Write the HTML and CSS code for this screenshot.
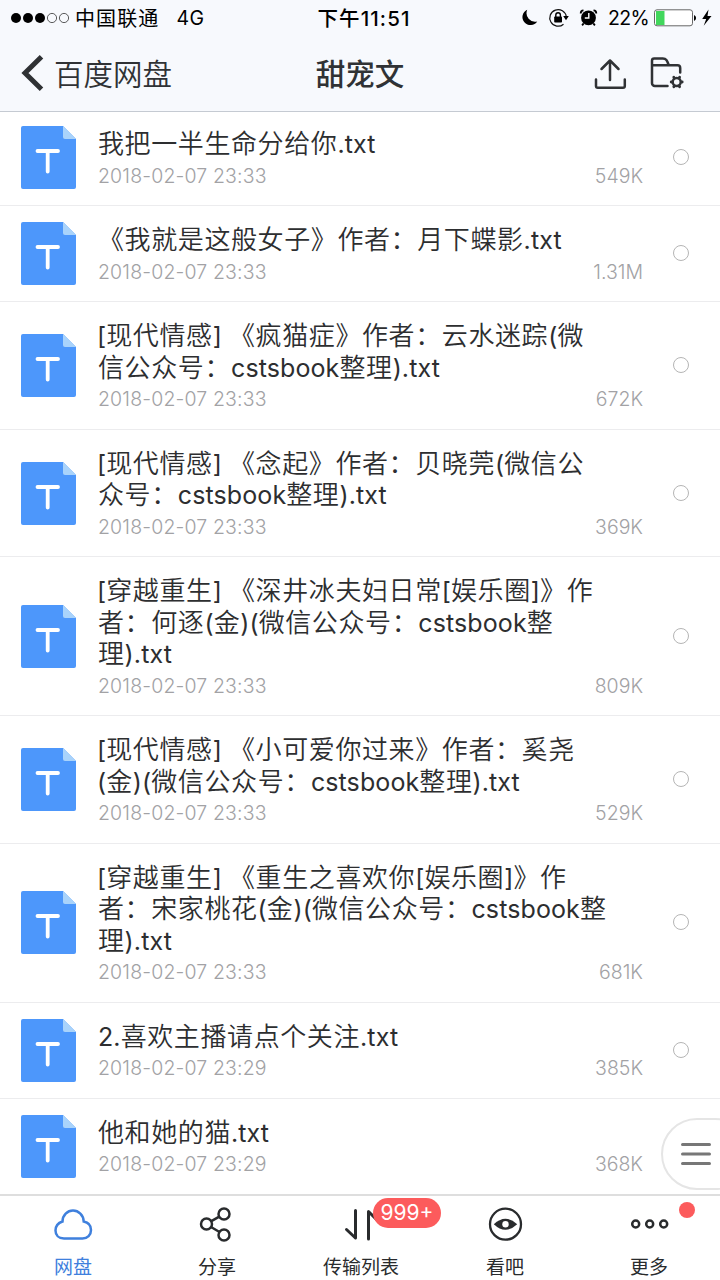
FILE: index.html
```html
<!DOCTYPE html>
<html lang="zh-CN">
<head>
<meta charset="utf-8">
<title>甜宠文</title>
<link rel="stylesheet" href="styles.css">
</head>
<body>
<svg class="defs" aria-hidden="true">
  <symbol id="file" viewBox="0 0 55 63">
    <path d="M2 0H42L55 13V61a2 2 0 0 1-2 2H2a2 2 0 0 1-2-2V2a2 2 0 0 1 2-2z" fill="#4d97fb"/>
    <path d="M42 0L55 13H44a2 2 0 0 1-2-2z" fill="#a9d3fb"/>
    <path d="M16.5 25H37M26.700 25V45.500" fill="none" stroke="#fff" stroke-width="3.800" stroke-linecap="round"/>
  </symbol>
</svg>
<div class="app">
  <header class="header">
    <div class="status">
      <div class="status-left">
        <svg class="signal" width="60" height="12" viewBox="0 0 60 12"><circle cx="6" cy="6" r="5"/><circle cx="18" cy="6" r="5"/><circle cx="30" cy="6" r="5"/><g fill="none" stroke="#333" stroke-width=".8"><circle cx="42" cy="6" r="4.600"/><circle cx="54" cy="6" r="4.600"/></g></svg>
        <span class="carrier">中国联通</span><span class="net">4G</span>
      </div>
      <div class="clock">下午11:51</div>
      <div class="status-right">
        <svg width="92" height="24" viewBox="516 6 92 24">
          <path d="M527.200 9.800a8 8 0 1 0 10 11.600a8.600 8.600 0 0 1-10-11.600z"/>
          <path d="M563.500 24.200a8.300 8.300 0 1 1 2.800-7.500" fill="none" stroke="#111" stroke-width="1.200"/>
          <path d="M563.200 16h5.600l-2.800 4.200z"/>
          <rect x="554.200" y="16.400" width="7.800" height="6.200" rx=".8"/><path d="M555.800 17v-2a2.300 2.300 0 0 1 4.600 0v2" fill="none" stroke="#000" stroke-width="1.400"/>
          <circle cx="588.500" cy="17.800" r="7.400"/><path d="M583.500 10.400a3 3 0 0 0-2.800 3M593.500 10.400a3 3 0 0 1 2.800 3M583.700 23.400l-1.600 2M593.300 23.400l1.600 2" fill="none" stroke="#000" stroke-width="1.800"/>
          <path d="M588.800 13v5h-4" fill="none" stroke="#fff" stroke-width="1.400"/>
        </svg>
        <span class="percent">22%</span>
        <svg width="60" height="24" viewBox="653 6 60 24"><rect x="654.500" y="9.800" width="38" height="16" rx="2.500" fill="#fff" stroke="#666" stroke-width="1"/><path d="M656 11h8.500v14H656z" fill="#42d75c"/><path d="M694 15v6a3.200 3.200 0 0 0 0-6z"/><path d="M708.500 9.500L702.200 19h4l-2.500 6.800L711.500 16h-4z"/></svg>
      </div>
    </div>
    <nav class="nav">
      <div class="back"><svg width="24" height="38" viewBox="0 0 24 38"><path d="M20.500 2.800L4 19L20.500 35.200" fill="none" stroke="#2f3134" stroke-width="5"/></svg><span>百度网盘</span></div>
      <h1 class="title">甜宠文</h1>
      <div class="actions">
        <svg width="96" height="36" viewBox="592 56 96 36" fill="none" stroke="#303235" stroke-width="2.500" stroke-linecap="round" stroke-linejoin="round"><path d="M610 80V60.500M601.500 69L610 60.500l8.500 8.500M596 79.500V86a1.800 1.800 0 0 0 1.800 1.800H623a1.800 1.800 0 0 0 1.800-1.800V79.500"/><path d="M667.500 86h-12.700a2.800 2.800 0 0 1-2.800-2.800V60.800a2.200 2.200 0 0 1 2.200-2.200h8.600c3.500 0 4.200 1.600 5.700 5.900M652 65.300h25.500a2.700 2.700 0 0 1 2.700 2.700v4.500"/><circle cx="676.700" cy="82" r="4"/><path d="M671.200 82h.5M681.700 82h.5M673.800 77.200l.4.700M679.200 86.100l.4.700M673.800 86.800l.4-.7M679.200 77.900l.4-.7" stroke-width="2.800"/></svg>
      </div>
    </nav>
  </header>

  <main class="list">
    <article class="row"><svg class="file"><use href="#file"/></svg><div class="info"><h2>我把一半生命分给你<i>.txt</i></h2><p><time>2018-02-07 23:33</time><span>549K</span></p></div><b class="check"></b></article>
    <article class="row"><svg class="file"><use href="#file"/></svg><div class="info"><h2>《我就是这般女子》作者：月下蝶影<i>.txt</i></h2><p><time>2018-02-07 23:33</time><span>1.31M</span></p></div><b class="check"></b></article>
    <article class="row"><svg class="file"><use href="#file"/></svg><div class="info"><h2><i class="open">[</i>现代情感<i>] </i>《疯猫症》作者：云水迷踪<i>(</i>微<br>信公众号：<i>cstsbook</i>整理<i>).txt</i></h2><p><time>2018-02-07 23:33</time><span>672K</span></p></div><b class="check"></b></article>
    <article class="row"><svg class="file"><use href="#file"/></svg><div class="info"><h2><i class="open">[</i>现代情感<i>] </i>《念起》作者：贝晓莞<i>(</i>微信公<br>众号：<i>cstsbook</i>整理<i>).txt</i></h2><p><time>2018-02-07 23:33</time><span>369K</span></p></div><b class="check"></b></article>
    <article class="row"><svg class="file"><use href="#file"/></svg><div class="info"><h2><i class="open">[</i>穿越重生<i>] </i>《深井冰夫妇日常<i>[</i>娱乐圈<i>]</i>》作<br>者：何逐<i>(</i>金<i>)(</i>微信公众号：<i>cstsbook</i>整<br>理<i>).txt</i></h2><p><time>2018-02-07 23:33</time><span>809K</span></p></div><b class="check"></b></article>
    <article class="row"><svg class="file"><use href="#file"/></svg><div class="info"><h2><i class="open">[</i>现代情感<i>] </i>《小可爱你过来》作者：奚尧<br><i class="open">(</i>金<i>)(</i>微信公众号：<i>cstsbook</i>整理<i>).txt</i></h2><p><time>2018-02-07 23:33</time><span>529K</span></p></div><b class="check"></b></article>
    <article class="row"><svg class="file"><use href="#file"/></svg><div class="info"><h2><i class="open">[</i>穿越重生<i>] </i>《重生之喜欢你<i>[</i>娱乐圈<i>]</i>》作<br>者：宋家桃花<i>(</i>金<i>)(</i>微信公众号：<i>cstsbook</i>整<br>理<i>).txt</i></h2><p><time>2018-02-07 23:33</time><span>681K</span></p></div><b class="check"></b></article>
    <article class="row"><svg class="file"><use href="#file"/></svg><div class="info"><h2><i>2.</i>喜欢主播请点个关注<i>.txt</i></h2><p><time>2018-02-07 23:29</time><span>385K</span></p></div><b class="check"></b></article>
    <article class="row"><svg class="file"><use href="#file"/></svg><div class="info"><h2>他和她的猫<i>.txt</i></h2><p><time>2018-02-07 23:29</time><span>368K</span></p></div></article>
  </main>

  <button class="drawer" aria-label="菜单"><svg width="30" height="24" viewBox="0 0 30 24"><path d="M1.500 2.500h27M1.500 12h27M1.500 21.500h27" stroke="#777" stroke-width="3" stroke-linecap="round"/></svg></button>

  <footer class="tabs">
    <div class="tab active"><svg viewBox="0 0 44 38"><path d="M10.500 15.500C10.500 9 15.500 4.500 21 4.500S31.500 9 31.700 15.500C37 16.500 39 20 39 24c0 5-3.500 8.500-8.500 8.500H12C6.500 32.500 3.500 29 3.500 24.500C3.500 20 6 17 10.500 15.500z" fill="none" stroke="#3f80dd" stroke-width="2.500"/></svg><span>网盘</span></div>
    <div class="tab"><svg viewBox="0 0 44 38"><g fill="none" stroke="#292b2d" stroke-width="2.500"><circle cx="10.500" cy="18" r="5.500"/><circle cx="28" cy="8" r="5.500"/><circle cx="28" cy="29" r="5.500"/><path d="M15.300 15.200l8-4.500M15 21l8.500 5"/></g></svg><span>分享</span></div>
    <div class="tab"><svg viewBox="0 0 44 38"><path d="M6.500 23.500L15.500 32V4.500M28.500 33V5.500l9 9" fill="none" stroke="#292b2d" stroke-width="3" stroke-linecap="round" stroke-linejoin="round"/></svg><span>传输列表</span><em class="badge">999+</em></div>
    <div class="tab"><svg viewBox="0 0 44 38"><circle cx="21.500" cy="18.200" r="15.500" fill="none" stroke="#292b2d" stroke-width="2.300"/><path d="M9.800 18.200Q21.500 7.200 33.200 18.200Q21.500 29.200 9.800 18.200z" fill="#292b2d"/><circle cx="21.500" cy="18.200" r="3.200" fill="#fff"/></svg><span>看吧</span></div>
    <div class="tab"><svg viewBox="0 0 44 38"><g fill="none" stroke="#292b2d" stroke-width="2.500"><circle cx="7.700" cy="18" r="3.500"/><circle cx="21.700" cy="18" r="3.500"/><circle cx="35.700" cy="18" r="3.500"/></g></svg><span>更多</span><em class="dot"></em></div>
  </footer>
</div>
</body>
</html>
```
FILE: styles.css
```css
* { box-sizing: border-box; }
body { margin: 0; background: #fff; font-family: Inter, "Noto Sans CJK SC", sans-serif; color: #2d2e30; }
h1, h2, p { margin: 0; font-weight: 400; }
i, em, b { font-style: normal; font-weight: 400; }
svg { display: block; flex: none; }
.defs { position: absolute; width: 0; height: 0; }
.app { position: relative; width: 720px; height: 1280px; overflow: hidden; display: flex; flex-direction: column; white-space: nowrap; }

.header { position: relative; z-index: 1; height: 112px; flex: none; background: #f7f9fd; border-bottom: 1px solid #c5cad2; }
.status { height: 36px; display: grid; grid-template-columns: 300px 126px 1fr; align-items: center; color: #000; font-size: 20px; }
.status-left { display: flex; align-items: center; padding-left: 10px; }
.carrier { margin-left: 5px; letter-spacing: 1.100px; padding-bottom: 2px; }
.net { margin-left: 17px; font-size: 19.500px; letter-spacing: .5px; }
.clock { text-align: center; font-weight: 500; font-size: 20.500px; letter-spacing: 1.100px; padding: 0 0 2px 2px; }
.status-right { display: flex; align-items: center; justify-content: flex-end; padding-right: 7px; }
.percent { width: 45px; font-size: 19.500px; letter-spacing: -.6px; }
.nav { height: 75px; display: grid; grid-template-columns: 240px 240px 240px; align-items: center; color: #303235; }
.back { display: flex; align-items: center; padding: 0 0 1px 21px; font-size: 29.500px; }
.back span { margin-left: 9px; padding-bottom: 3px; font-weight: 350; }
.title { text-align: center; font-weight: 500; font-size: 29.500px; padding-bottom: 4px; }
.actions { display: flex; justify-content: flex-end; padding-right: 32px; }

.list { flex: none; margin-top: -2px; height: 1084px; }
.row { display: flex; align-items: center; padding: 18px 31px 12.500px 21px; border-bottom: 1px solid #ececee; }
.row:last-child { border-bottom: 0; }
.file { width: 55px; height: 63px; margin-top: -5px; }
.info { width: 545px; margin-left: 22px; flex: none; }
.info h2 { font-size: 26px; line-height: 31.500px; letter-spacing: .6px; font-weight: 350; }
.info h2 i { font-size: 25px; line-height: 0; letter-spacing: .1px; }
.info h2 .open { margin-left: -1px; }
.info p { display: flex; justify-content: space-between; font-size: 19.500px; line-height: 33px; font-weight: 300; color: #a2a2a5; }
.info time { letter-spacing: .15px; }
.check { width: 16px; height: 16px; margin: 0 0 6px 30px; border: 1.500px solid #b5b5b5; border-radius: 50%; }

.drawer { position: absolute; left: 661px; top: 1118px; width: 90px; height: 72px; padding: 0 0 0 18px; border: 2px solid #e5e5e5; border-radius: 36px; background: #fff; }
.tabs { position: relative; height: 86px; flex: none; display: grid; grid-template-columns: repeat(5, 144px); padding-left: 1px; border-top: 2px solid #dedede; background: #fff; }
.tab { position: relative; display: flex; flex-direction: column; align-items: center; padding-top: 10px; font-size: 19px; line-height: 26px; color: #292b2d; font-weight: 400; }
.tab svg { width: 44px; height: 38px; margin-left: 2px; }
.tab span { margin-top: 11px; }
.tab.active { color: #3f80dd; }
.badge { position: absolute; left: 84px; top: 2px; width: 68px; height: 30px; border-radius: 15px; background: #fc5b5c; color: #fff; font-size: 21px; line-height: 30px; text-align: center; }
.dot { position: absolute; left: 102px; top: 6px; width: 16px; height: 16px; border-radius: 50%; background: #fc5b5c; }
```
